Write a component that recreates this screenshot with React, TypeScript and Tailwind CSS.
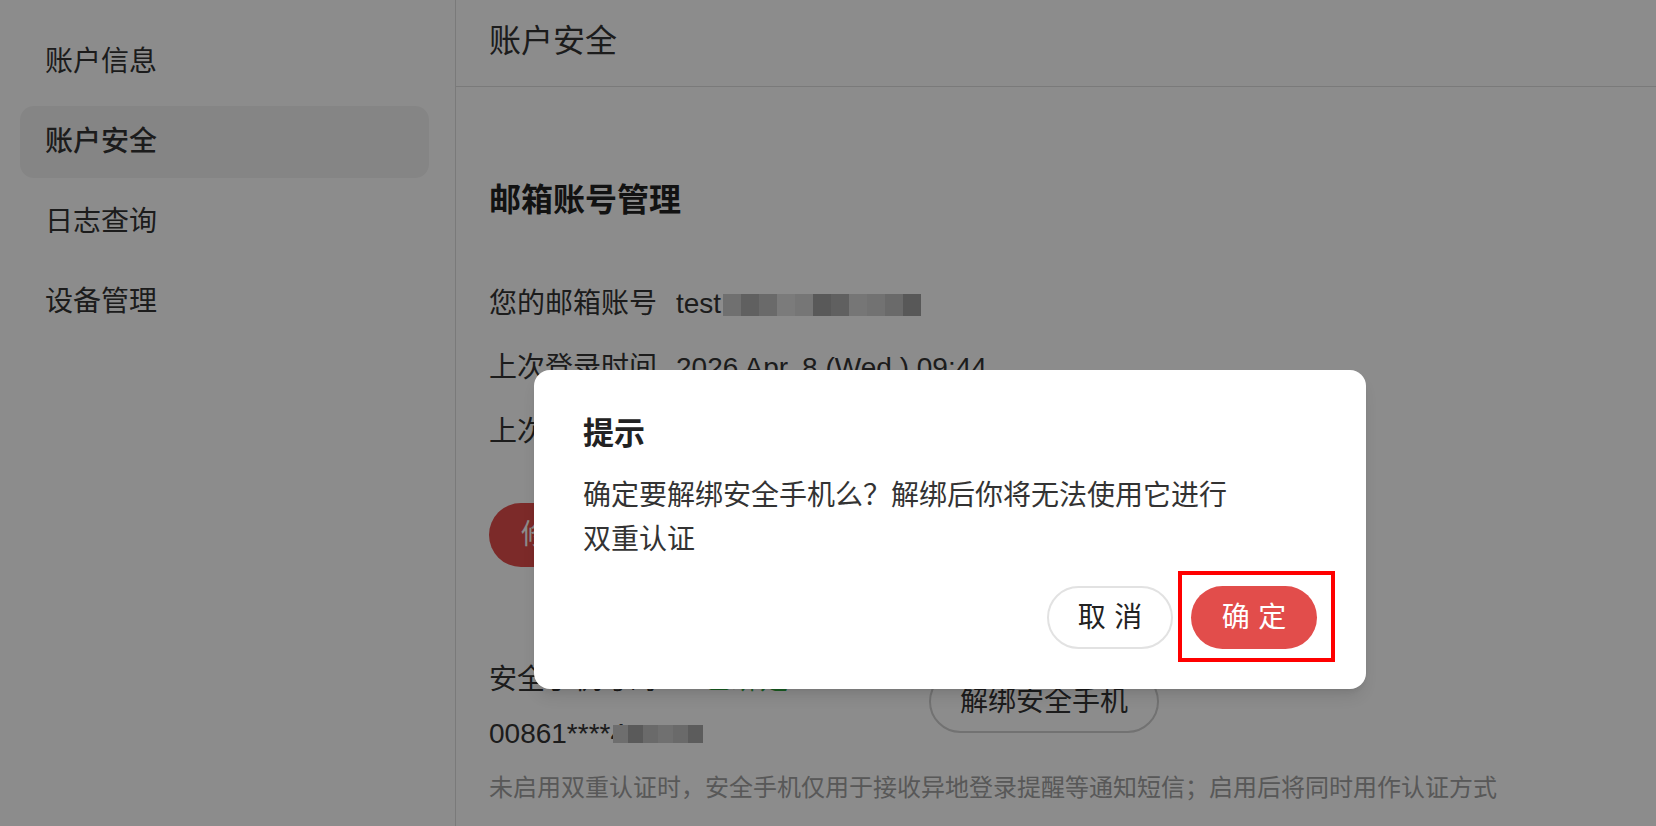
import React from "react";

const font = { fontFamily: '"Liberation Sans", "Noto Sans CJK SC", sans-serif' };

const navItems = ["账户信息", "账户安全", "日志查询", "设备管理"];

// pixelated mask over the email address
const emailCells = ["#cccccc", "#afafaf", "#c1c1c1", "#e1e1e1", "#d7d7d7", "#a2a2a2", "#afafaf", "#d7d7d7", "#cfcfcf", "#c1c1c1", "#a0a0a0"];
const phoneCells = ["#c8c8c8", "#a4a4a4", "#c1c1c1", "#cccccc", "#c1c1c1", "#a8a8a8"];

function Sidebar() {
  return (
    <aside className="w-[456px] shrink-0 h-full border-r border-[#dedede] pl-5 pr-[26px] pt-[26px] flex flex-col gap-2">
      {navItems.map((item) => (
        <div
          key={item}
          className={`h-[72px] flex items-center pl-[25px] rounded-[14px] text-[28px] text-[#333] ${
            item === "账户安全" ? "bg-[#f3f3f3] font-medium" : ""
          }`}
        >
          {item}
        </div>
      ))}
    </aside>
  );
}

function InfoRow({ label, children }: { label: string; children: React.ReactNode }) {
  return (
    <div className="flex items-center leading-[44px] text-[28px] text-[#333]">
      <span className="w-[187px] shrink-0">{label}</span>
      {children}
    </div>
  );
}

function Main() {
  return (
    <main className="flex-1 h-full flex flex-col">
      <header className="h-[87px] shrink-0 border-b border-[#dedede] pl-[33px] flex items-center pb-1">
        <h1 className="text-[32px] text-[#333]">账户安全</h1>
      </header>

      <section className="pl-[33px] pt-[91px]">
        <h2 className="text-[32px] leading-[44px] font-bold text-[#222]">邮箱账号管理</h2>

        <div className="mt-[60px] flex flex-col gap-[20px]">
          <InfoRow label="您的邮箱账号">
            <span>test</span>
            <span className="flex ml-[2px] h-[22px] mt-[2px]">
              {emailCells.map((c, i) => (
                <span key={i} className="w-[18px] h-full" style={{ backgroundColor: c }} />
              ))}
            </span>
          </InfoRow>
          <InfoRow label="上次登录时间">
            <span>2026 Apr. 8 (Wed.) 09:44</span>
          </InfoRow>
          <InfoRow label="上次登录地点">
            <span>中国 北京</span>
          </InfoRow>
        </div>

        <button className="mt-[49px] h-[64px] px-8 rounded-full bg-[#e24d4b] text-white text-[28px]">
          修改密码
        </button>

        <div className="mt-[91px] flex items-start">
          <div className="w-[440px] shrink-0 flex flex-col gap-[10px] text-[28px] leading-[44px] text-[#333]">
            <div className="flex">
              <span>安全手机号码</span>
              <span className="ml-[47px] text-[#2fa83f]">已绑定</span>
            </div>
            <div className="flex items-center">
              <span>00861****4</span>
              <span className="flex h-[18px] -ml-[13px]">
                {phoneCells.map((c, i) => (
                  <span key={i} className="w-[15px] h-full" style={{ backgroundColor: c }} />
                ))}
              </span>
            </div>
          </div>
          <button className="mt-[12px] h-[63px] w-[230px] rounded-full border-2 border-[#cfcfcf] text-[28px] text-[#333]">
            解绑安全手机
          </button>
        </div>

        <p className="mt-[14px] text-[24px] leading-[36px] text-[#a0a0a0]">
          未启用双重认证时，安全手机仅用于接收异地登录提醒等通知短信；启用后将同时用作认证方式
        </p>
      </section>
    </main>
  );
}

export default function App() {
  return (
    <div className="relative h-screen w-full overflow-hidden bg-white flex" style={font}>
      <Sidebar />
      <Main />

      {/* dimmed backdrop */}
      <div className="absolute inset-0 bg-black/45" />

      {/* confirm dialog */}
      <div className="absolute left-[534px] top-[370px] w-[832px] bg-white rounded-[16px] shadow-lg pt-12 pb-10 px-[49px]">
        <h3 className="text-[31px] leading-8 font-bold text-[#222]">提示</h3>
        <p className="mt-6 max-w-[650px] text-[28px] leading-[44px] text-[#333]">
          确定要解绑安全手机么？解绑后你将无法使用它进行双重认证
        </p>
        <div className="mt-6 flex justify-end gap-[18px]">
          <button className="h-[63px] w-[126px] rounded-full border-2 border-[#e2e2e2] text-[28px] text-[#222] tracking-[0.3em] pl-[0.3em]">
            取消
          </button>
          <button className="h-[63px] w-[126px] rounded-full bg-[#e24d4b] text-[28px] text-white tracking-[0.3em] pl-[0.3em]">
            确定
          </button>
        </div>
      </div>

      {/* highlight annotation */}
      <div className="absolute left-[1178px] top-[571px] w-[157px] h-[91px] border-4 border-[#ff0000]" />
    </div>
  );
}
